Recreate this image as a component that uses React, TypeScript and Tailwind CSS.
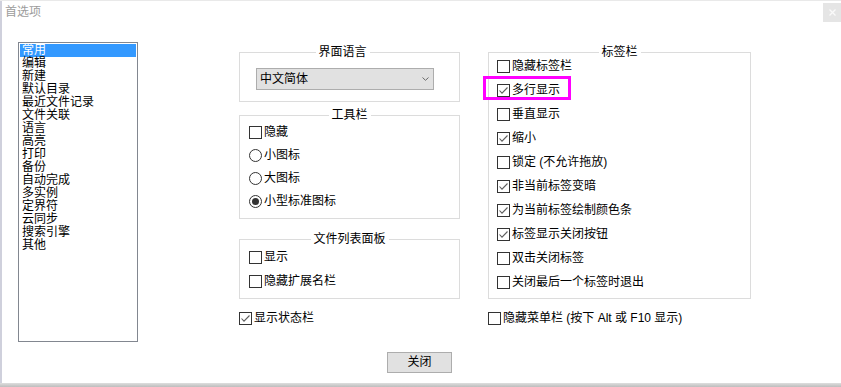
import React from "react";

//-----> Small controls <--------------------------------------//
const CheckBox = ({ checked }: { checked?: boolean }) => (
  <span className="flex h-[13px] w-[13px] shrink-0 items-center justify-center border border-[#333333] bg-white">
    {checked && (
      <svg width="11" height="11" viewBox="0 0 11 11">
        <polyline
          points="1.5,5.5 4,8.2 9.5,2.5"
          fill="none"
          stroke="#5e5e5e"
          strokeWidth="1.1"
        />
      </svg>
    )}
  </span>
);

const Radio = ({ checked }: { checked?: boolean }) => (
  <span className="flex h-[13px] w-[13px] shrink-0 items-center justify-center rounded-full border border-[#333333] bg-white">
    {checked && <span className="h-[7px] w-[7px] rounded-full bg-[#333333]" />}
  </span>
);

type RowProps = {
  label: string;
  checked?: boolean;
  radio?: boolean;
  h?: string;
  children?: React.ReactNode;
};

const Row = ({ label, checked, radio, h = "h-[24px]", children }: RowProps) => (
  <div className={`relative flex items-center ${h}`}>
    {radio ? <Radio checked={checked} /> : <CheckBox checked={checked} />}
    <span className="ml-[2px] whitespace-nowrap">{label}</span>
    {children}
  </div>
);

type GroupProps = {
  title: string;
  titleClass?: string;
  className?: string;
  children: React.ReactNode;
};

const GroupBox = ({ title, titleClass = "", className = "", children }: GroupProps) => (
  <div className={`relative border border-[#dcdcdc] ${className}`}>
    <span
      className={`absolute left-1/2 top-[-7px] -translate-x-1/2 whitespace-nowrap bg-white px-[3px] leading-[13px] ${titleClass}`}
    >
      {title}
    </span>
    {children}
  </div>
);

//-----> Data <------------------------------------------------//
const categories = [
  "常用",
  "编辑",
  "新建",
  "默认目录",
  "最近文件记录",
  "文件关联",
  "语言",
  "高亮",
  "打印",
  "备份",
  "自动完成",
  "多实例",
  "定界符",
  "云同步",
  "搜索引擎",
  "其他",
];

const tabOptions: { label: string; checked?: boolean; mark?: boolean }[] = [
  { label: "隐藏标签栏" },
  { label: "多行显示", checked: true, mark: true },
  { label: "垂直显示" },
  { label: "缩小", checked: true },
  { label: "锁定 (不允许拖放)" },
  { label: "非当前标签变暗", checked: true },
  { label: "为当前标签绘制颜色条", checked: true },
  { label: "标签显示关闭按钮", checked: true },
  { label: "双击关闭标签" },
  { label: "关闭最后一个标签时退出" },
];

//-----> Page <------------------------------------------------//
export default function App() {
  return (
    <div className="flex h-[387px] w-[841px] flex-col overflow-hidden bg-white font-['Liberation_Sans','Noto_Sans_CJK_SC',sans-serif] text-[12px] leading-[13px] text-black">
      <div className="h-px shrink-0 bg-[#e9e9e9]" />
      <div className="flex min-h-0 flex-1">
        <div className="w-[2px] shrink-0 bg-[#cfd0dc]" />
        <div className="flex flex-1 flex-col">
          {/* title bar */}
          <div className="flex h-[41px] shrink-0 items-start">
            <span className="pl-[3px] pt-[5px] text-[#9c9c9c]">首选项</span>
            <div className="ml-auto mt-[2px] flex h-[19px] w-[18px] items-center justify-center bg-[#e5e5e5]">
              <svg width="7" height="7" viewBox="0 0 7 7">
                <path d="M0.5 0.5 L6.5 6.5 M6.5 0.5 L0.5 6.5" stroke="#fafafa" strokeWidth="1.3" />
              </svg>
            </div>
          </div>

          {/* body */}
          <div className="flex items-start pl-[16px]">
            {/* category list */}
            <div className="h-[300px] w-[120px] shrink-0 border border-[#828790] p-[1px]">
              {categories.map((c, i) => (
                <div
                  key={c}
                  className={`h-[13px] pl-[2px] leading-[13px] ${
                    i === 0 ? "bg-[#3399ff] text-white" : ""
                  }`}
                >
                  {c}
                </div>
              ))}
            </div>

            {/* middle column */}
            <div className="ml-[101px] mt-[10px] flex w-[221px] flex-col">
              <GroupBox title="界面语言" titleClass="-ml-[7px]" className="px-[16px] pb-[11px] pt-[15px]">
                <div className="flex h-[22px] w-[178px] items-center justify-between border border-[#adadad] bg-[#e1e1e1] pl-[3px] pr-[4px]">
                  <span>中文简体</span>
                  <svg width="7" height="4" viewBox="0 0 7 4">
                    <polyline points="0.5,0.5 3.5,3.3 6.5,0.5" fill="none" stroke="#6a6a6a" strokeWidth="1" />
                  </svg>
                </div>
              </GroupBox>

              <GroupBox title="工具栏" className="mt-[13px] pb-[5px] pl-[9px] pt-[5px]">
                <Row label="隐藏" h="h-[23px]" />
                <Row label="小图标" radio h="h-[23px]" />
                <Row label="大图标" radio h="h-[23px]" />
                <Row label="小型标准图标" radio checked h="h-[23px]" />
              </GroupBox>

              <GroupBox title="文件列表面板" className="mt-[20px] pb-[5px] pl-[9px] pt-[5px]">
                <Row label="显示" />
                <Row label="隐藏扩展名栏" />
              </GroupBox>

              <div className="mt-[7px]">
                <Row label="显示状态栏" checked />
              </div>
            </div>

            {/* right column */}
            <div className="ml-[28px] mt-[10px] flex w-[263px] flex-col">
              <GroupBox title="标签栏" className="pb-[4px] pl-[8px] pt-[1px]">
                {tabOptions.map((o) => (
                  <Row key={o.label} label={o.label} checked={o.checked}>
                    {o.mark && (
                      <span className="pointer-events-none absolute left-[-14px] top-[-2px] h-[24px] w-[88px] border-[3px] border-[#ff00ff]" />
                    )}
                  </Row>
                ))}
              </GroupBox>

              <div className="mt-[7px]">
                <Row label="隐藏菜单栏 (按下 Alt 或 F10 显示)" />
              </div>
            </div>
          </div>

          {/* footer */}
          <div className="mt-[10px] flex justify-center pr-[4px]">
            <button className="flex h-[21px] w-[65px] items-center justify-center border border-[#adadad] bg-[#e1e1e1] text-[12px] leading-[13px]">
              关闭
            </button>
          </div>
        </div>
      </div>
      <div className="h-[4px] shrink-0 bg-linear-to-b from-[#dedede] to-[#bdbdbd]" />
    </div>
  );
}
